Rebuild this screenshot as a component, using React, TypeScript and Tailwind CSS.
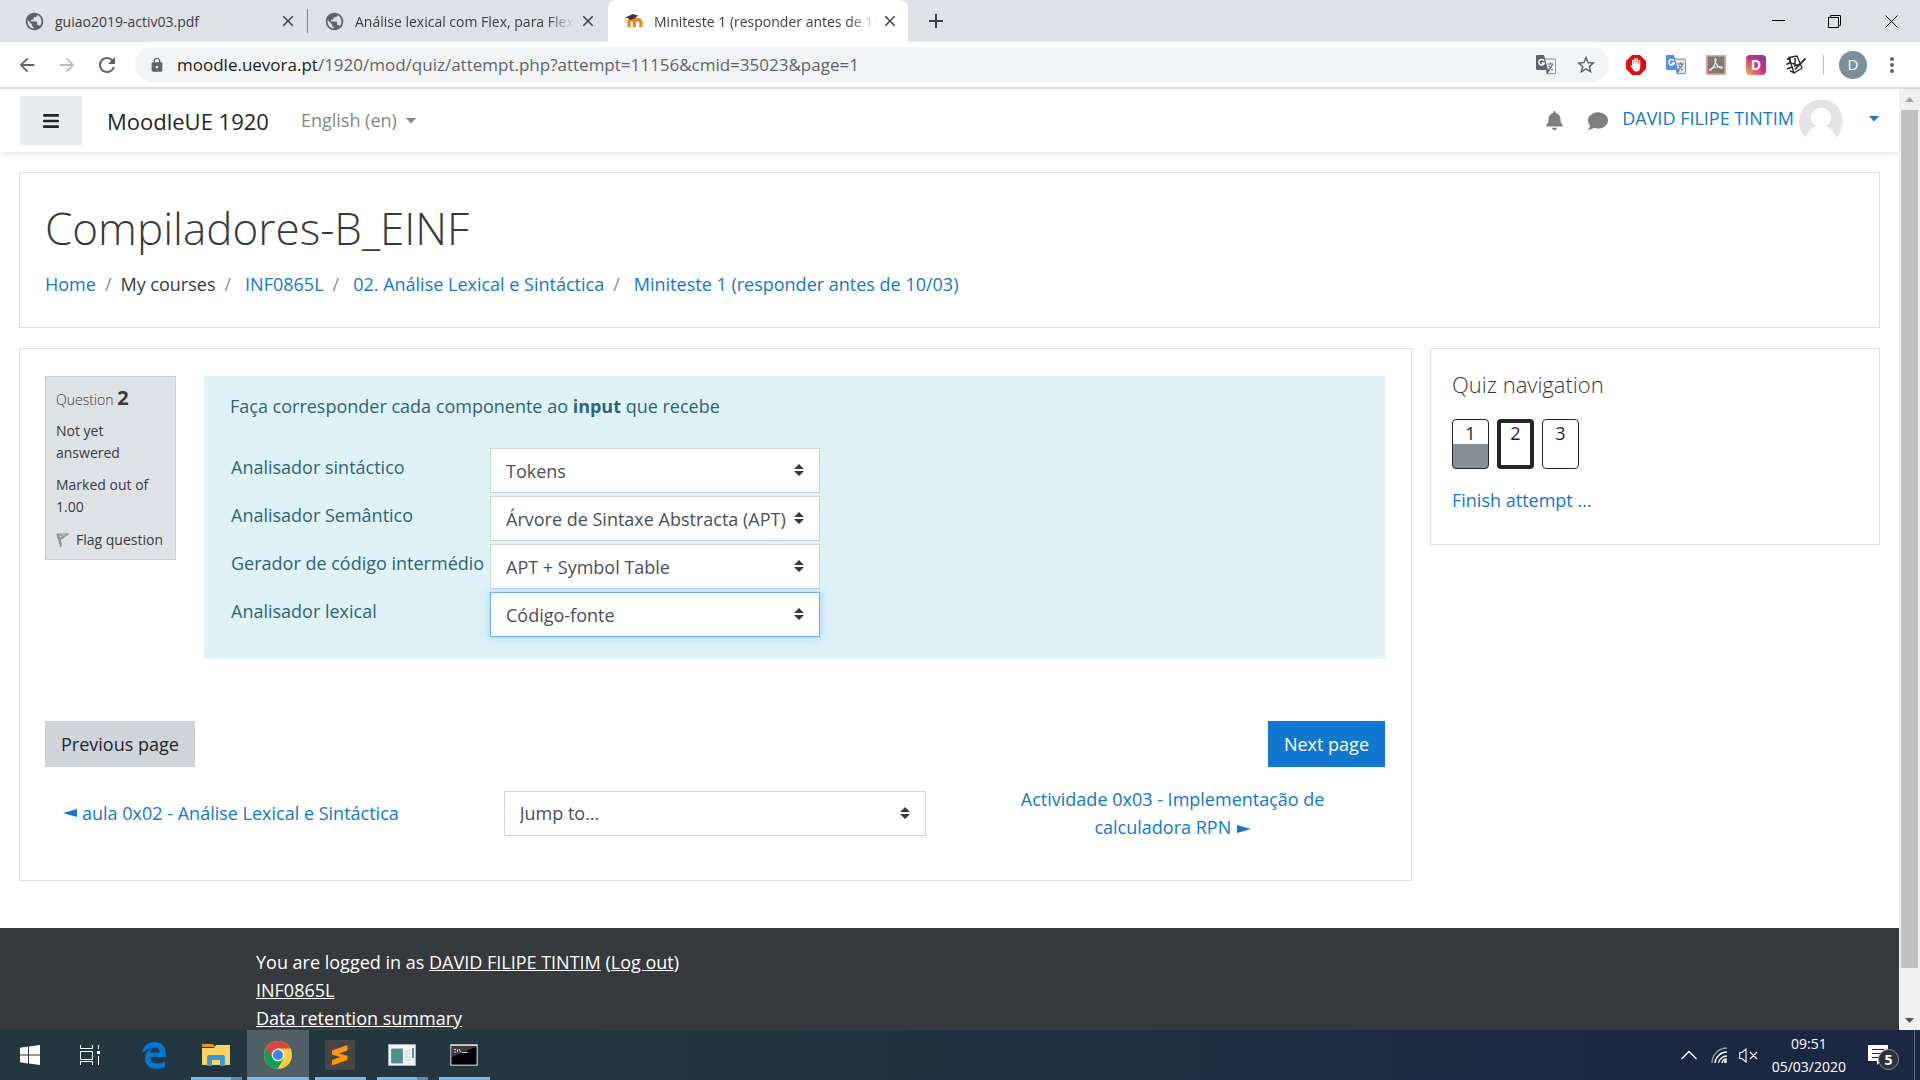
import React from "react";
import { FaBars, FaBell, FaComment } from "react-icons/fa";
import { MdArrowBack, MdArrowForward, MdClose, MdLock, MdPublic, MdRefresh, MdStarBorder, MdAdd } from "react-icons/md";

type BrowserTab = { title: string; icon: "globe" | "moodle"; active?: boolean };

const tabs: BrowserTab[] = [
  { title: "guiao2019-activ03.pdf", icon: "globe" },
  { title: "Análise lexical com Flex, para Flex", icon: "globe" },
  { title: "Miniteste 1 (responder antes de 10/03)", icon: "moodle", active: true },
];

function MoodleIcon() {
  return (
    <svg viewBox="0 0 20 16" className="h-4 w-5 shrink-0" aria-hidden="true">
      <path d="M5 14V9.500q0-3 2.700-3t2.700 3V14M10.400 9.500q0-3 3.200-3t3.200 3V14" fill="none" stroke="#f98012" strokeWidth="3" />
      <path d="M1 4.500 9 1l5 1.500-3 3-5 1.500L4 5z" fill="#3a3a3a" />
      <path d="M2 5v5" stroke="#f7b27a" strokeWidth="1" />
    </svg>
  );
}

function TabStrip() {
  return (
    <header className="flex h-[42px] shrink-0 bg-[#dee1e6] pl-2">
      {tabs.map((t, i) => (
        <div
          key={t.title}
          className={
            t.active
              ? "flex w-[300px] items-center rounded-t-lg bg-white pl-4 pr-2"
              : "flex w-[300px] items-center pl-4"
          }
        >
          {t.icon === "globe" ? <MdPublic className="size-[21px] shrink-0 text-[#5f6368]" /> : <MoodleIcon />}
          <span
            className={
              i === 0
                ? "ml-2.5 flex-1 overflow-hidden whitespace-nowrap text-[14px] text-[#3c4043]"
                : "ml-2.5 flex-1 overflow-hidden whitespace-nowrap text-[14px] text-[#3c4043] [mask-image:linear-gradient(to_right,black_88%,transparent)]"
            }
          >
            {t.title}
          </span>
          <button aria-label="Close tab" className="ml-1 flex size-5 shrink-0 items-center justify-center text-[#3c4043]">
            <MdClose className="size-[18px]" />
          </button>
          {i < 2 && <span className={i === 0 ? "ml-[9px] h-6 w-px bg-[#80868b]" : "ml-[10px]"} />}
        </div>
      ))}
      <button aria-label="New tab" className="ml-4 flex w-6 items-center justify-center text-[#3c4043]">
        <MdAdd className="size-6" />
      </button>
      <div className="ml-auto flex text-black">
        <button aria-label="Minimize" className="flex w-14 items-center justify-center">
          <svg viewBox="0 0 13 13" className="size-[13px]"><path d="M0 5.500h13" stroke="currentColor" /></svg>
        </button>
        <button aria-label="Restore" className="flex w-14 items-center justify-center">
          <svg viewBox="0 0 13 13" className="size-[13px]" fill="none" stroke="currentColor"><path d="M.5 2.500h10v10h-10zM2.500 2.500v-2h10v10h-2" /></svg>
        </button>
        <button aria-label="Close window" className="flex w-[58px] items-center justify-center">
          <svg viewBox="0 0 13 13" className="size-[13px]" stroke="currentColor"><path d="M.5.5l12 12M12.500.5l-12 12" /></svg>
        </button>
      </div>
    </header>
  );
}

function TranslateIcon({ color, page }: { color: string; page: string }) {
  return (
    <svg viewBox="0 0 20 20" className="size-5" aria-hidden="true">
      <path d="M8 4h11q.7 0 .7.7V18q0 .7-.7.7H11z" fill={page} stroke="#80868b" strokeWidth="1" />
      <path d="M11.500 9h6M14.500 7.500V9M16.500 9q-1 4-4.500 6M12.800 10.500q1.500 3 4 4.500" fill="none" stroke="#607d8b" strokeWidth="1.200" />
      <path d="M1 0h7l4 15H1q-1 0-1-1V1q0-1 1-1z" fill={color} />
      <path d="M11 15h3l-3 4.500z" fill={color} />
      <path d="M8 5.700A2.800 2.800 0 1 0 8.300 8H5.700" fill="none" stroke="#fff" strokeWidth="1.500" />
    </svg>
  );
}

function Toolbar() {
  return (
    <div className="flex h-[47px] shrink-0 items-center border-b-2 border-[#d9dae0] bg-white text-[#5f6368]">
      <button aria-label="Back" className="ml-[15px] flex w-6 justify-center"><MdArrowBack className="size-[22px]" /></button>
      <button aria-label="Forward" className="ml-4 flex w-6 justify-center text-[#babcbe]"><MdArrowForward className="size-[22px]" /></button>
      <button aria-label="Reload" className="ml-4 flex w-6 justify-center"><MdRefresh className="size-6" /></button>
      <div className="ml-4 flex h-[35px] flex-1 items-center rounded-full bg-[#f1f3f4] pl-[14px] pr-3">
        <MdLock className="size-4" />
        <a href="#address" className="ml-3 flex-1 whitespace-nowrap text-[17px] text-[#5f6368]">
          <span className="text-[#202124]">moodle.uevora.pt</span>/1920/mod/quiz/attempt.php?attempt=11156&amp;cmid=35023&amp;page=1
        </a>
        <button aria-label="Translate this page"><TranslateIcon color="#5f6368" page="#f1f3f4" /></button>
        <button aria-label="Bookmark" className="ml-[19px]"><MdStarBorder className="size-[22px]" /></button>
      </div>
      <div className="ml-[17px] flex items-center gap-5">
        <button aria-label="Ad blocker">
          <svg viewBox="0 0 20 20" className="size-5">
            <path d="M6 0h8l6 6v8l-6 6H6l-6-6V6z" fill="#e40d0d" />
            <path d="M6.800 10V5.500M9 9V3.700M11.200 9V4M13.400 10V5.500" stroke="#fff" strokeWidth="1.600" strokeLinecap="round" />
            <path d="M6 8.500h8.200V12q0 4.500-4 4.500-2.500 0-4-3L4.500 11q1-1 1.700.2z" fill="#fff" />
          </svg>
        </button>
        <button aria-label="Google Translate"><TranslateIcon color="#4f8df5" page="#dfe3e6" /></button>
        <button aria-label="Adobe Acrobat">
          <svg viewBox="0 0 20 20" className="size-5">
            <path d="M.8.8h18.400v18.400H.8z" fill="#7d7a79" stroke="#f3a396" strokeWidth="1.600" />
            <path d="M4 15.500q4-2.500 6-10 .3-2-.6-1.800-1.200.6.600 4.500 2 4 5.500 5 1.500-.2.500-1.200-4-1.200-11 1.600-1.800 1.200-1 1.900z" fill="none" stroke="#e8e8e8" strokeWidth="1.200" />
          </svg>
        </button>
        <button aria-label="Direct messages" className="flex size-5 items-center justify-center rounded bg-linear-to-tr from-[#fbab3c] via-[#cf2f7e] to-[#8134af] text-[14px] font-bold text-white">D</button>
        <button aria-label="Notes">
          <svg viewBox="0 0 20 20" className="size-5" fill="none" stroke="#2b2b2b">
            <path d="M3 2.500 11 1l5 12-8 5z" strokeWidth="1.300" />
            <path d="M1 4.500 4 3M.5 9.500 5 7M1 14l5-2M4 16l4 1.500M4 3v5l5 1V3M8 11l5-1.500" strokeWidth="1.500" />
            <path d="M19.500 3.500 12 11l-3 3.500" strokeWidth="1.800" />
          </svg>
        </button>
      </div>
      <span className="ml-[17px] h-5 w-px bg-[#bdc1c6]" />
      <button aria-label="Profile" className="ml-[15px] flex size-7 items-center justify-center rounded-full bg-[#78909c] text-[15px] text-white">D</button>
      <button aria-label="Browser menu" className="ml-5 mr-[23px]">
        <svg viewBox="0 0 10 20" className="h-5 w-2.5" fill="#5f6368"><circle cx="5" cy="4" r="2" /><circle cx="5" cy="10" r="2" /><circle cx="5" cy="16" r="2" /></svg>
      </button>
    </div>
  );
}

function Caret() {
  return <svg viewBox="0 0 10 6" className="h-[6px] w-[10px]" fill="currentColor" aria-hidden="true"><path d="M0 0h10L5 5.500z" /></svg>;
}

function NavBar() {
  return (
    <nav className="relative z-10 flex h-[63px] shrink-0 items-center bg-white pl-5 shadow-[0_2px_6px_rgba(0,0,0,0.1)]">
      <button aria-label="Side panel" className="flex h-[49px] w-[62px] items-center justify-center bg-[#e9ecef] text-[#212529]">
        <FaBars className="size-[18px]" />
      </button>
      <a href="#home" className="ml-[25px] text-[22px] leading-8 text-[#212529]">MoodleUE 1920</a>
      <button className="ml-8 flex items-center gap-[9px] text-[18px] text-[#868686]">
        English (en) <Caret />
      </button>
      <div className="ml-auto flex items-center pr-[20px] text-[#7f7f7f]">
        <button aria-label="Notifications"><FaBell className="size-[19px]" /></button>
        <button aria-label="Messages" className="ml-6"><FaComment className="size-5" /></button>
        <button className="ml-[14px] flex items-center text-[18px] text-[#1177d1]">
          <span className="pb-1">DAVID FILIPE TINTIM</span>
          <svg viewBox="0 0 44 44" className="ml-[5px] mr-[26px] size-11" aria-hidden="true">
            <path d="M7 38.500A22 22 0 1 1 37 38.500L35 34Q31 28 26.500 27.500a10 10 0 1 0-9 0Q13 28 9 34z" fill="#e4e4e4" />
          </svg>
          <span className="pb-1"><Caret /></span>
        </button>
      </div>
    </nav>
  );
}

function SelectBox({ id, label, options, focused }: { id: string; label: string; options: string[]; focused?: boolean }) {
  return (
    <div className="relative">
      <select
        id={id}
        aria-label={label}
        className={
          focused
            ? "block h-[45px] w-full appearance-none border border-[#66b0f2] bg-white pl-[15px] pr-8 text-[18px] text-[#495057] shadow-[0_0_8px_rgba(102,176,242,0.5)] outline-none"
            : "block h-[45px] w-full appearance-none border border-[#ced4da] bg-white pl-[15px] pr-8 text-[18px] text-[#495057] outline-none"
        }
      >
        {options.map((o) => <option key={o}>{o}</option>)}
      </select>
      <svg viewBox="0 0 10 12" className="pointer-events-none absolute right-4 top-4 h-3 w-[10px]" fill="#343a40" aria-hidden="true">
        <path d="M0 5 5 0l5 5zM0 7h10l-5 5z" />
      </svg>
    </div>
  );
}

const matches = [
  { label: "Analisador sintáctico", value: "Tokens" },
  { label: "Analisador Semântico", value: "Árvore de Sintaxe Abstracta (APT)" },
  { label: "Gerador de código intermédio", value: "APT + Symbol Table" },
  { label: "Analisador lexical", value: "Código-fonte" },
];

function QuestionInfo() {
  return (
    <aside className="w-[131px] shrink-0 self-start border border-[#caced6] bg-[#dee2e6] px-[10px] pb-[8px] pt-[7px] text-sm leading-[22px] text-[#373a3c]">
      <h3 className="text-sm font-light leading-7">Question <span className="text-xl font-bold">2</span></h3>
      <p className="mt-[6px]">Not yet answered</p>
      <p className="mt-[10px]">Marked out of 1.00</p>
      <button className="mt-[11px] flex items-center gap-[7px] whitespace-nowrap">
        <svg viewBox="0 0 13 15" className="h-[15px] w-[13px] shrink-0" fill="none" stroke="#8d8d8d" aria-hidden="true">
          <path d="M1 1l4 13M2.500 1l3 12M1 1h11L4.500 6.500M4 2.500l4 .5-3.500 2" strokeWidth="1.200" />
        </svg>
        Flag question
      </button>
    </aside>
  );
}

function Question() {
  return (
    <section className="flex-1 bg-[#def2f8] px-[26px] pb-[19px] pt-4 text-[18px] leading-7 text-[#2f6473]">
      <p>Faça corresponder cada componente ao <b>input</b> que recebe</p>
      <table className="mt-7 border-separate border-spacing-0">
        <tbody>
          {matches.map((m, i) => (
            <tr key={m.label}>
              <td className="whitespace-nowrap pb-[3px] pl-px pt-[5px] pr-0 align-top">
                <label htmlFor={"match" + i} className="block w-[259px]">{m.label}</label>
              </td>
              <td className="w-[330px] pb-[3px]">
                <SelectBox id={"match" + i} label={m.label} options={[m.value]} focused={i === 3} />
              </td>
            </tr>
          ))}
        </tbody>
      </table>
    </section>
  );
}

const crumbs = ["Home", "My courses", "INF0865L", "02. Análise Lexical e Sintáctica", "Miniteste 1 (responder antes de 10/03)"];

function PageContent() {
  return (
    <main className="px-[19px] pt-5 text-[18px] leading-7 text-[#373a3c]">
      <header className="border border-[#dedfe0] px-[25px] pb-[29px] pt-[25px]">
        <h1 className="text-[44px] font-light leading-[60px]">Compiladores-B_EINF</h1>
        <ol className="mt-3 flex">
          {crumbs.map((c, i) => (
            <li key={c} className="flex">
              {i > 0 && <span className={i === 1 ? "mx-[9px] text-[#868e96]" : "ml-[9px] mr-[14px] text-[#868e96]"}>/</span>}
              {i === 1 ? c : <a href="#crumb" className="text-[#1177d1]">{c}</a>}
            </li>
          ))}
        </ol>
      </header>
      <div className="mt-5 flex items-start gap-[18px]">
        <section className="flex-1 border border-[#dedfe0] pb-[39px] pl-[25px] pr-[26px] pt-[27px]">
          <div className="flex gap-7">
            <QuestionInfo />
            <Question />
          </div>
          <div className="mt-[62px] flex justify-between">
            <button className="h-[46px] bg-[#ced4da] px-4 text-[#212529]">Previous page</button>
            <button className="h-[46px] bg-[#1177d1] px-4 text-white">Next page</button>
          </div>
          <div className="mt-[18px] grid grid-cols-3 items-center">
            <a href="#previous-activity" className="flex items-center gap-[5px] pl-[18px] text-[#1177d1]">
              <svg viewBox="0 0 14 8" className="h-2 w-[14px]" fill="currentColor" aria-hidden="true"><path d="M0 4 14 0v8z" /></svg>
              aula 0x02 - Análise Lexical e Sintáctica
            </a>
            <div className="px-3">
              <SelectBox id="jump" label="Jump to" options={["Jump to..."]} />
            </div>
            <a href="#next-activity" className="pl-[62px] pr-10 text-center text-[#1177d1]">
              Actividade 0x03 - Implementação de calculadora RPN{" "}
              <svg viewBox="0 0 14 8" className="ml-px inline h-2 w-[14px]" fill="currentColor" aria-hidden="true"><path d="M14 4 0 0v8z" /></svg>
            </a>
          </div>
        </section>
        <aside className="w-[450px] shrink-0 border border-[#dedfe0] px-[21px] pb-[30px] pt-5">
          <h2 className="text-[22px] font-light leading-[30px]">Quiz navigation</h2>
          <div className="mt-5 flex gap-2 leading-[26px] text-[#212529]">
            <button className="flex h-[50px] w-[37px] items-start justify-center rounded border border-[#212529] bg-linear-to-b from-white from-50% to-[#868e96] to-50%">1</button>
            <button className="flex h-[50px] w-[37px] items-start justify-center rounded border-4 border-[#212529]"><span className="-mt-[3px]">2</span></button>
            <button className="flex h-[50px] w-[37px] items-start justify-center rounded border border-[#212529]">3</button>
          </div>
          <a href="#finish" className="mt-[17px] block text-[#1177d1]">Finish attempt ...</a>
        </aside>
      </div>
    </main>
  );
}

function Footer() {
  return (
    <footer className="mt-[47px] h-[240px] bg-[#373a3c] pl-64 pt-5 text-[18px] leading-7 text-white">
      <p>You are logged in as <a href="#profile" className="underline">DAVID FILIPE TINTIM</a> (<a href="#logout" className="underline">Log out</a>)</p>
      <p><a href="#course" className="underline">INF0865L</a></p>
      <p><a href="#retention" className="underline">Data retention summary</a></p>
    </footer>
  );
}

function ScrollBar() {
  return (
    <div className="flex w-[21px] shrink-0 flex-col items-center bg-[#f0f0f0]">
      <svg viewBox="0 0 9 5" className="my-2 h-[5px] w-[9px]" fill="#a3a3a3" aria-hidden="true"><path d="M0 5h9L4.500 0z" /></svg>
      <div className="w-[17px] grow-[857] bg-[#c1c1c1]" />
      <div className="grow-[43]" />
      <svg viewBox="0 0 9 5" className="my-[7px] h-[5px] w-[9px]" fill="#505050" aria-hidden="true"><path d="M0 0h9L4.500 5z" /></svg>
    </div>
  );
}

const apps = [
  {
    name: "Edge", open: false, active: false,
    icon: (
      <svg viewBox="0 0 26 28" className="h-7 w-[26px]">
        <path d="M1 12.500C2 5 7 1 13.300 1 21 1 25 6.500 25 13v3H9c.2 4.500 4 6.500 7.500 6.500 3 0 5.500-.8 7.500-2v5.300c-2.500 1.400-5.500 2-8.500 2C8 27.800 4 23 4 17.500c0-5 2.500-8 6.500-10C6 7.500 3 9.500 1 12.500zM9.200 11.500h9.300c0-3-1.500-4.800-4.500-4.800-2.700 0-4.500 2-4.800 4.800z" fill="#0078d7" />
      </svg>
    ),
  },
  {
    name: "File Explorer", open: true, active: false, split: true,
    icon: (
      <svg viewBox="0 0 28 24" className="h-6 w-7">
        <path d="M0 1h11l2 3H0z" fill="#dc9c12" />
        <path d="M0 5h12l2-3h14v20H0z" fill="#fdd365" />
        <path d="M5 23V14q0-2 2-2h14q2 0 2 2v9h-5v-6h-8v6z" fill="#3b99dd" />
      </svg>
    ),
  },
  {
    name: "Chrome", open: true, active: true,
    icon: (
      <svg viewBox="0 0 28 28" className="size-7">
        <circle cx="14" cy="14" r="14" fill="#ffcd40" />
        <path d="M14 14h-7L1.900 7A14 14 0 0 0 13.500 28l6-10.500z" fill="#0f9d58" />
        <path d="M14 14 7.500 16 1.900 7A14 14 0 0 1 26.300 7.500H14z" fill="#db4437" />
        <circle cx="14" cy="14" r="6.400" fill="#f1f1f1" />
        <circle cx="14" cy="14" r="5.100" fill="#4285f4" />
      </svg>
    ),
  },
  {
    name: "Sublime Text", open: true, active: false,
    icon: (
      <svg viewBox="0 0 30 30" className="size-[30px]">
        <rect width="30" height="30" rx="2" fill="#474747" />
        <path d="M7 10.500 22.500 5v5.500L14 13.500l8.500 2.500v4L7 25.500V20l8.500-3L7 14.500z" fill="#ff9800" />
      </svg>
    ),
  },
  {
    name: "Window application", open: true, active: false, split: true,
    icon: (
      <svg viewBox="0 0 28 22" className="h-[22px] w-7">
        <path d="M.5.5h27v21H.5z" fill="#f0f2f3" stroke="#aab2b5" />
        <path d="M3.500 5h11v14h-11z" fill="#45958c" stroke="#6c93ad" />
        <path d="M17 7h5M17 10h5M17 13h5M17 16h5" stroke="#d0d3d6" />
        <path d="M24 4h2v10h-2z" fill="#4f9a93" />
      </svg>
    ),
  },
  {
    name: "Command Prompt", open: true, active: false,
    icon: (
      <svg viewBox="0 0 28 22" className="h-[22px] w-7">
        <path d="M.8.8h26.400v20.400H.8z" fill="#000" stroke="#a5a8aa" strokeWidth="1.500" />
        <path d="M2 3h24L2 13z" fill="#3d3d3d" />
        <path d="M1 1.500h26" stroke="#d4d6d8" strokeWidth="1.500" />
        <path d="M4 5.500h2M4 8h2M7.500 5.500v2.500M9 5l2 3.500M12.500 8.500h5" stroke="#ddd" />
      </svg>
    ),
  },
];

function TaskBar() {
  return (
    <footer className="flex h-[50px] shrink-0 bg-linear-to-r from-[#22373f] from-30% to-[#1b2843] to-85% text-white">
      <button aria-label="Start" className="flex w-[60px] items-center justify-center">
        <svg viewBox="0 0 20 20" className="size-5" fill="#fff"><path d="M0 2.800 8 1.600v7.900H0zM9 1.500 20 0v9.500H9zM0 10.500h8v7.900L0 17.200zM9 10.500h11V20L9 18.500z" /></svg>
      </button>
      <button aria-label="Task view" className="flex w-[63px] items-center justify-center pr-1">
        <svg viewBox="0 0 20 20" className="size-5" fill="none" stroke="#fff"><path d="M.5 0v3.500h12V0M.5 6.500h12v8H.5zM.5 20v-3.500h12V20M18.500 0v4M18.500 11v9" /><path d="M17 6h3v3h-3z" fill="#fff" stroke="none" /></svg>
      </button>
      {apps.map((a) => (
        <button
          key={a.name}
          aria-label={a.name}
          className={a.active ? "flex w-[62px] flex-col items-center bg-[#4f6167]" : "flex w-[62px] flex-col items-center"}
        >
          <span className="flex flex-1 items-center justify-center pt-[3px]">{a.icon}</span>
          <span
            className={
              !a.open ? "h-[3px]"
                : a.active ? "h-[3px] w-full bg-[#76b9ed]"
                : a.split ? "h-[3px] w-[51px] border-r-[11px] border-[#5b8bb0] bg-[#76b9ed]"
                : "h-[3px] w-[51px] bg-[#76b9ed]"
            }
          />
        </button>
      ))}
      <div className="ml-auto flex items-center">
        <button aria-label="Show hidden icons">
          <svg viewBox="0 0 16 10" className="h-[10px] w-4" fill="none" stroke="#fff" strokeWidth="1.300"><path d="M.5 9 8 1.500 15.500 9" /></svg>
        </button>
        <button aria-label="Network" className="ml-[14px]">
          <svg viewBox="0 0 17 17" className="size-[17px]" fill="none" stroke="#fff">
            <path d="M1 16A15 15 0 0 1 16 1" stroke="#9aa3b1" strokeWidth="1.300" />
            <path d="M4 16A12 12 0 0 1 16 5M7.500 16A8.500 8.500 0 0 1 16 9M11 16a5 5 0 0 1 5-4" strokeWidth="1.300" />
            <circle cx="14.500" cy="14.500" r="1.500" fill="#fff" stroke="none" />
          </svg>
        </button>
        <button aria-label="Sound muted" className="ml-[11px]">
          <svg viewBox="0 0 19 15" className="h-[15px] w-[19px]" fill="none" stroke="#fff" strokeWidth="1.100"><path d="M.6 4.500H3L7 1v13L3 10.500H.6zM11 4l7 7M18 4l-7 7" /></svg>
        </button>
        <time className="ml-[14px] text-center text-[14px] leading-[23px]">09:51<br />05/03/2020</time>
        <button aria-label="Notifications" className="relative ml-[22px] mr-[14px] h-[30px] w-[32px]">
          <svg viewBox="0 0 20 20" className="size-5"><path d="M0 0h20v16h-7l-4 4v-4H0z" fill="#fff" /><path d="M4 4.500h12M4 8.500h12M4 12.500h8" stroke="#1c2941" /></svg>
          <span className="absolute bottom-0 left-[10px] flex size-[21px] items-center justify-center rounded-full border border-[#8d9199] bg-[#2d3138] text-[14px] font-bold">5</span>
        </button>
        <span className="mr-[5px] h-[50px] w-px bg-[#6a7284]" />
      </div>
    </footer>
  );
}

export default function App() {
  return (
    <div className="flex h-screen flex-col overflow-hidden bg-white font-['Open_Sans','Noto_Sans',sans-serif]">
      <TabStrip />
      <Toolbar />
      <div className="flex min-h-0 flex-1">
        <div className="flex-1 overflow-hidden">
          <NavBar />
          <PageContent />
          <Footer />
        </div>
        <ScrollBar />
      </div>
      <TaskBar />
    </div>
  );
}
